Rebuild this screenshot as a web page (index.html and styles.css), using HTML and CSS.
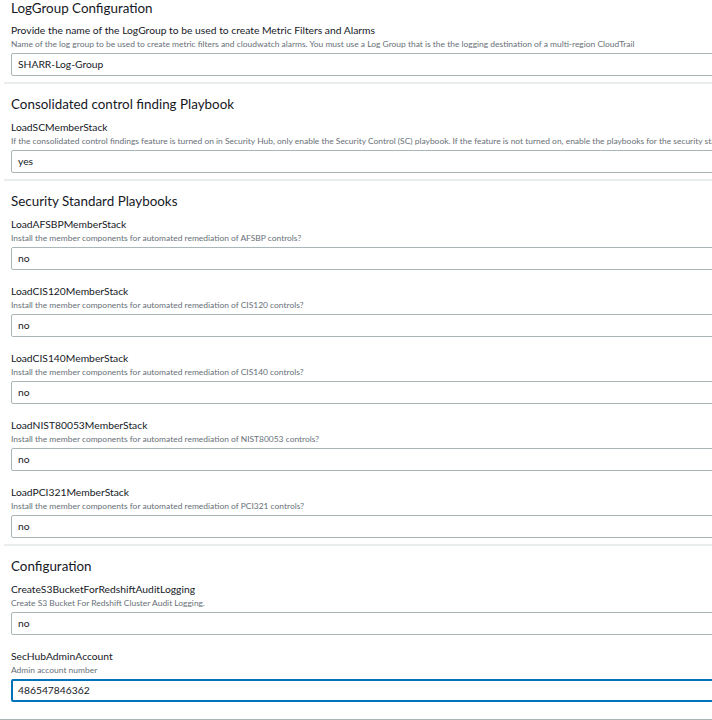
FILE: index.html
```html
<!DOCTYPE html>
<html>
<head>
<meta charset="utf-8">
<link rel="stylesheet" href="styles.css">
</head>
<body>
<div class="page">
  <section class="section first">
    <h2 class="heading">LogGroup Configuration</h2>
    <div class="field">
      <div class="label">Provide the name of the LogGroup to be used to create Metric Filters and Alarms</div>
      <div class="desc">Name of the log group to be used to create metric filters and cloudwatch alarms. You must use a Log Group that is the the logging destination of a multi-region CloudTrail</div>
      <div class="input">SHARR-Log-Group</div>
    </div>
  </section>
  <section class="section">
    <h2 class="heading">Consolidated control finding Playbook</h2>
    <div class="field">
      <div class="label">LoadSCMemberStack</div>
      <div class="desc">If the consolidated control findings feature is turned on in Security Hub, only enable the Security Control (SC) playbook. If the feature is not turned on, enable the playbooks for the security standards that are enabled in Security Hub.</div>
      <div class="input">yes</div>
    </div>
  </section>
  <section class="section">
    <h2 class="heading">Security Standard Playbooks</h2>
    <div class="field">
      <div class="label">LoadAFSBPMemberStack</div>
      <div class="desc">Install the member components for automated remediation of AFSBP controls?</div>
      <div class="input">no</div>
    </div>
    <div class="field">
      <div class="label">LoadCIS120MemberStack</div>
      <div class="desc">Install the member components for automated remediation of CIS120 controls?</div>
      <div class="input">no</div>
    </div>
    <div class="field">
      <div class="label">LoadCIS140MemberStack</div>
      <div class="desc">Install the member components for automated remediation of CIS140 controls?</div>
      <div class="input">no</div>
    </div>
    <div class="field">
      <div class="label">LoadNIST80053MemberStack</div>
      <div class="desc">Install the member components for automated remediation of NIST80053 controls?</div>
      <div class="input">no</div>
    </div>
    <div class="field">
      <div class="label">LoadPCI321MemberStack</div>
      <div class="desc">Install the member components for automated remediation of PCI321 controls?</div>
      <div class="input">no</div>
    </div>
  </section>
  <section class="section last">
    <h2 class="heading">Configuration</h2>
    <div class="field">
      <div class="label">CreateS3BucketForRedshiftAuditLogging</div>
      <div class="desc">Create S3 Bucket For Redshift Cluster Audit Logging.</div>
      <div class="input">no</div>
    </div>
    <div class="field">
      <div class="label">SecHubAdminAccount</div>
      <div class="desc">Admin account number</div>
      <div class="input focused">486547846362</div>
    </div>
  </section>
</div>
</body>
</html>
```

FILE: styles.css
```css
html, body {
  margin: 0;
  padding: 0;
  background: #ffffff;
  overflow: hidden;
}
body {
  font-family: "Lato", "Open Sans", sans-serif;
  color: #16191f;
}
.page {
  width: 740px;
  height: 720px;
  border-bottom: 1px solid #aab7b8;
  box-sizing: border-box;
}
.section {
  margin-left: 4px;
  padding: 10px 0 6px 7px;
  border-bottom: 2px solid #eaeded;
}
.section.first {
  padding-top: 0;
}
.section.last {
  border-bottom: none;
}
.heading {
  margin: 0 0 6px 0;
  font-size: 13.4px;
  line-height: 20px;
  font-weight: 400;
  color: #16191f;
}
.section.first .heading {
  line-height: 17px;
}
.field + .field {
  margin-top: 14px;
}
.label {
  font-size: 10.3px;
  line-height: 15px;
  color: #16191f;
  white-space: nowrap;
}
.desc {
  font-size: 8.45px;
  line-height: 12px;
  color: #687078;
  white-space: nowrap;
}
.input {
  margin-top: 3px;
  height: 23px;
  box-sizing: border-box;
  border: 1px solid #aab7b8;
  border-radius: 2px;
  padding: 0 6px;
  font-size: 10.3px;
  line-height: 21px;
  color: #16191f;
}
.input.focused {
  border: 2px solid #0073bb;
  padding: 0 5px;
  line-height: 19px;
}
```
